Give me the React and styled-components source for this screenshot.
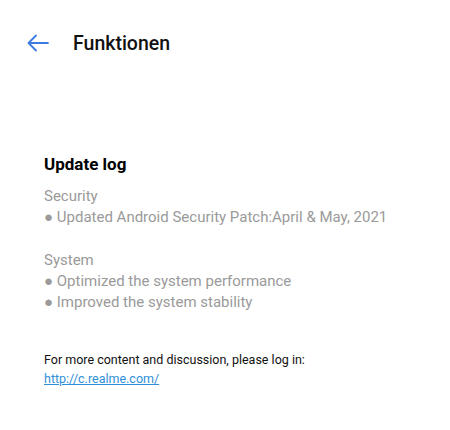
import styled, { createGlobalStyle } from "styled-components";

const GlobalStyle = createGlobalStyle`
  body {
    margin: 0;
    background: #fff;
    font-family: Roboto, "Noto Sans", sans-serif;
  }
`;

const Page = styled.div`
  width: 450px;
  height: 430px;
  background: #fff;
`;

const Header = styled.header`
  display: flex;
  align-items: center;
  height: 86px;
  padding-left: 27px;
  box-sizing: border-box;
  gap: 24px;
`;

const BackButton = styled.button`
  background: none;
  border: none;
  padding: 0;
  display: flex;
  cursor: pointer;
`;

const Title = styled.h1`
  margin: 0;
  font-size: 19.5px;
  font-weight: 500;
  color: #111;
`;

const Content = styled.main`
  padding: 67px 44px 0;
`;

const Heading = styled.h2`
  margin: 0 0 11px;
  font-size: 17px;
  font-weight: 700;
  color: #000;
  line-height: 22px;
`;

const Section = styled.div`
  margin-bottom: 22px;
`;

const Line = styled.p`
  margin: 0;
  font-size: 15px;
  line-height: 21px;
  color: #9a9a9a;
`;

const Footer = styled.div`
  margin-top: 37px;
  font-size: 12.5px;
  line-height: 19px;
  color: #111;
`;

const Link = styled.a`
  color: #2f8fd8;
  text-decoration: underline;
`;

const sections = [
  {
    name: "Security",
    items: ["Updated Android Security Patch:April & May, 2021"],
  },
  {
    name: "System",
    items: ["Optimized the system performance", "Improved the system stability"],
  },
];

export default function App() {
  return (
    <Page>
      <GlobalStyle />
      <Header>
        <BackButton aria-label="Back">
          <svg width="22" height="18" viewBox="0 0 22 18" fill="none">
            <path
              d="M21 9H2M9 1.5L1.5 9L9 16.5"
              stroke="#3c7be0"
              strokeWidth="1.8"
              strokeLinecap="round"
              strokeLinejoin="round"
            />
          </svg>
        </BackButton>
        <Title>Funktionen</Title>
      </Header>
      <Content>
        <Heading>Update log</Heading>
        {sections.map((s) => (
          <Section key={s.name}>
            <Line>{s.name}</Line>
            {s.items.map((it) => (
              <Line key={it}>● {it}</Line>
            ))}
          </Section>
        ))}
        <Footer>
          For more content and discussion, please log in:
          <br />
          <Link href="#">http://c.realme.com/</Link>
        </Footer>
      </Content>
    </Page>
  );
}
